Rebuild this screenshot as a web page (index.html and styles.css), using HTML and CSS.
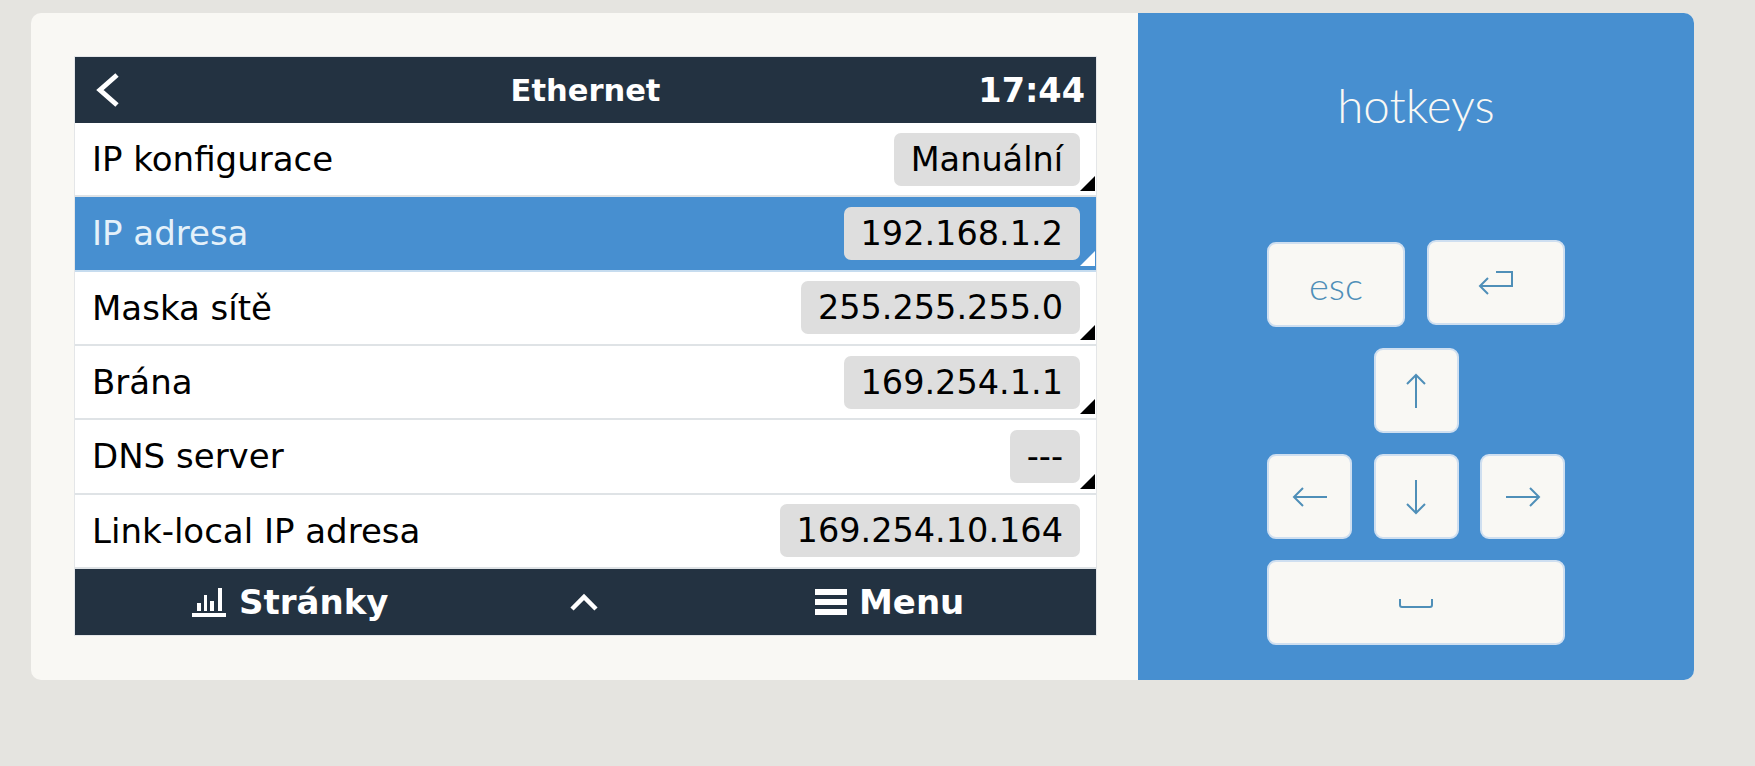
FILE: index.html
```html
<!DOCTYPE html>
<html>
<head>
  <title>Ethernet</title>
  <link rel="stylesheet" href="styles.css">
</head>
<body>
  <div class="panel">
    <div class="display">
      <div class="screen">
        <div class="top-bar">
          <svg class="back" width="26" height="36" viewBox="0 0 26 36"><path d="M23 3 L6 18 L23 33" fill="none" stroke="#fff" stroke-width="5"/></svg>
          <span class="title">Ethernet</span>
          <span class="clock">17:44</span>
        </div>
        <div class="rows">
          <div class="row"><span>IP konfigurace</span><span class="value">Manuální</span><i class="corner"></i></div>
          <div class="row selected"><span>IP adresa</span><span class="value">192.168.1.2</span><i class="corner"></i></div>
          <div class="row"><span>Maska sítě</span><span class="value">255.255.255.0</span><i class="corner"></i></div>
          <div class="row"><span>Brána</span><span class="value">169.254.1.1</span><i class="corner"></i></div>
          <div class="row"><span>DNS server</span><span class="value">---</span><i class="corner"></i></div>
          <div class="row"><span>Link-local IP adresa</span><span class="value">169.254.10.164</span></div>
        </div>
        <div class="bottom-bar">
          <div class="bottom-item pages">
            <svg width="34" height="29" viewBox="0 0 34 29"><path d="M0 27 H34" stroke="#fff" stroke-width="4"/><path d="M5 15 h4 v8 h-4 z M12 7 h3 v16 h-3 z M18 13 h4 v10 h-4 z M26 0 h4 v23 h-4 z" fill="#fff"/></svg>
            <span>Stránky</span>
          </div>
          <svg class="chevron" width="30" height="20" viewBox="0 0 30 20"><path d="M3 17 L15 5 L27 17" fill="none" stroke="#fff" stroke-width="4.500"/></svg>
          <div class="bottom-item menu">
            <svg width="32" height="26" viewBox="0 0 32 26"><path d="M0 0 H32 V6 H0 Z M0 10 H32 V16 H0 Z M0 20 H32 V26 H0 Z" fill="#fff"/></svg>
            <span>Menu</span>
          </div>
        </div>
      </div>
    </div>
    <div class="hotkeys">
      <div class="hotkeys-title">hotkeys</div>
      <div class="keys">
        <div class="key-row">
          <div class="key wide esc">esc</div>
          <div class="key wide">
            <svg width="36" height="26" viewBox="0 0 36 26"><path d="M18 2 H34 V16 H2 M10 8 L2 16 L10 24" fill="none" stroke="#4f8fb8" stroke-width="2"/></svg>
          </div>
        </div>
        <div class="key-row center">
          <div class="key">
            <svg width="20" height="36" viewBox="0 0 20 36"><path d="M10 35 V2 M1 11 L10 2 L19 11" fill="none" stroke="#4f8fb8" stroke-width="2"/></svg>
          </div>
        </div>
        <div class="key-row">
          <div class="key">
            <svg width="36" height="20" viewBox="0 0 36 20"><path d="M35 10 H2 M11 1 L2 10 L11 19" fill="none" stroke="#4f8fb8" stroke-width="2"/></svg>
          </div>
          <div class="key">
            <svg width="20" height="36" viewBox="0 0 20 36"><path d="M10 1 V34 M1 25 L10 34 L19 25" fill="none" stroke="#4f8fb8" stroke-width="2"/></svg>
          </div>
          <div class="key">
            <svg width="36" height="20" viewBox="0 0 36 20"><path d="M1 10 H34 M25 1 L34 10 L25 19" fill="none" stroke="#4f8fb8" stroke-width="2"/></svg>
          </div>
        </div>
        <div class="key-row">
          <div class="key space">
            <svg width="34" height="10" viewBox="0 0 34 10"><path d="M1 1 V7 Q1 9 3 9 H31 Q33 9 33 7 V1" fill="none" stroke="#4f8fb8" stroke-width="2"/></svg>
          </div>
        </div>
      </div>
    </div>
  </div>
</body>
</html>
```

FILE: styles.css
```css
html, body {
  height: 100%;
}
body {
  margin: 0;
  padding: 13px 0 0 31px;
  box-sizing: border-box;
  background-color: #e5e4e0;
  font-family: "DejaVu Sans", sans-serif;
  overflow: hidden;
}
.panel {
  display: flex;
  width: 1663px;
  height: 667px;
  border-radius: 10px;
  overflow: hidden;
  background-color: #f9f8f4;
}
.display {
  width: 1107px;
  padding: 44px 0 0 44px;
  box-sizing: border-box;
}
.screen {
  width: 1021px;
  height: 578px;
  display: flex;
  flex-direction: column;
  background: #fff;
  box-shadow: 0 0 0 1px #e4e6e8;
}
.top-bar {
  height: 66px;
  display: flex;
  align-items: center;
  position: relative;
  background-color: #233241;
  color: #fff;
  font-weight: bold;
}
.back {
  margin-left: 19px;
}
.title {
  position: absolute;
  left: 0;
  right: 0;
  text-align: center;
  font-size: 30.500px;
}
.clock {
  position: absolute;
  right: 11px;
  font-size: 33.500px;
}
.rows {
  flex: 1;
  display: grid;
  grid-template-rows: repeat(6, 1fr);
}
.row {
  position: relative;
  display: flex;
  align-items: center;
  justify-content: space-between;
  padding: 0 16px 0 17px;
  border-bottom: 2px solid #dfe3e6;
  font-size: 34px;
  color: #000;
}
.row.selected {
  background-color: #478fd0;
  color: #e4f1fa;
  border-bottom-color: #c6dcef;
}
.value {
  height: 53px;
  line-height: 53px;
  padding: 0 17px;
  border-radius: 7px;
  background-color: #dedede;
  color: #000;
  font-size: 33.500px;
}
.corner {
  position: absolute;
  right: 1px;
  bottom: 4px;
  width: 0;
  height: 0;
  border-left: 15px solid transparent;
  border-bottom: 15px solid #000;
}
.selected .corner {
  border-bottom-color: #fff;
}
.bottom-bar {
  height: 66px;
  display: flex;
  align-items: center;
  position: relative;
  background-color: #233241;
  color: #fff;
  font-weight: bold;
  font-size: 34px;
}
.bottom-item {
  position: absolute;
  display: flex;
  align-items: center;
}
.pages {
  left: 117px;
  gap: 13px;
}
.menu {
  left: 740px;
  gap: 12px;
}
.chevron {
  position: absolute;
  left: 494px;
}
.hotkeys {
  flex: 1;
  background-color: #478fd0;
}
.hotkeys-title {
  margin-top: 62px;
  height: 60px;
  line-height: 60px;
  text-align: center;
  font-family: Lato, sans-serif;
  font-weight: 300;
  font-size: 47.500px;
  color: #f9f8f4;
}
.keys {
  width: 298px;
  margin: 105px 0 0 129px;
  display: flex;
  flex-direction: column;
  gap: 21px;
}
.key-row {
  display: flex;
  justify-content: space-between;
}
.key-row.center {
  justify-content: center;
}
.key {
  width: 85px;
  height: 85px;
  display: flex;
  align-items: center;
  justify-content: center;
  box-sizing: border-box;
  border: 2px solid #cfdff0;
  border-radius: 9px;
  background-color: #f9f8f4;
}
.key.wide {
  width: 138px;
}
.key.space {
  width: 298px;
}
.esc {
  margin-top: 2px;
  font-family: Lato, sans-serif;
  font-weight: 300;
  font-size: 38px;
  color: #4f8fb8;
}
```
